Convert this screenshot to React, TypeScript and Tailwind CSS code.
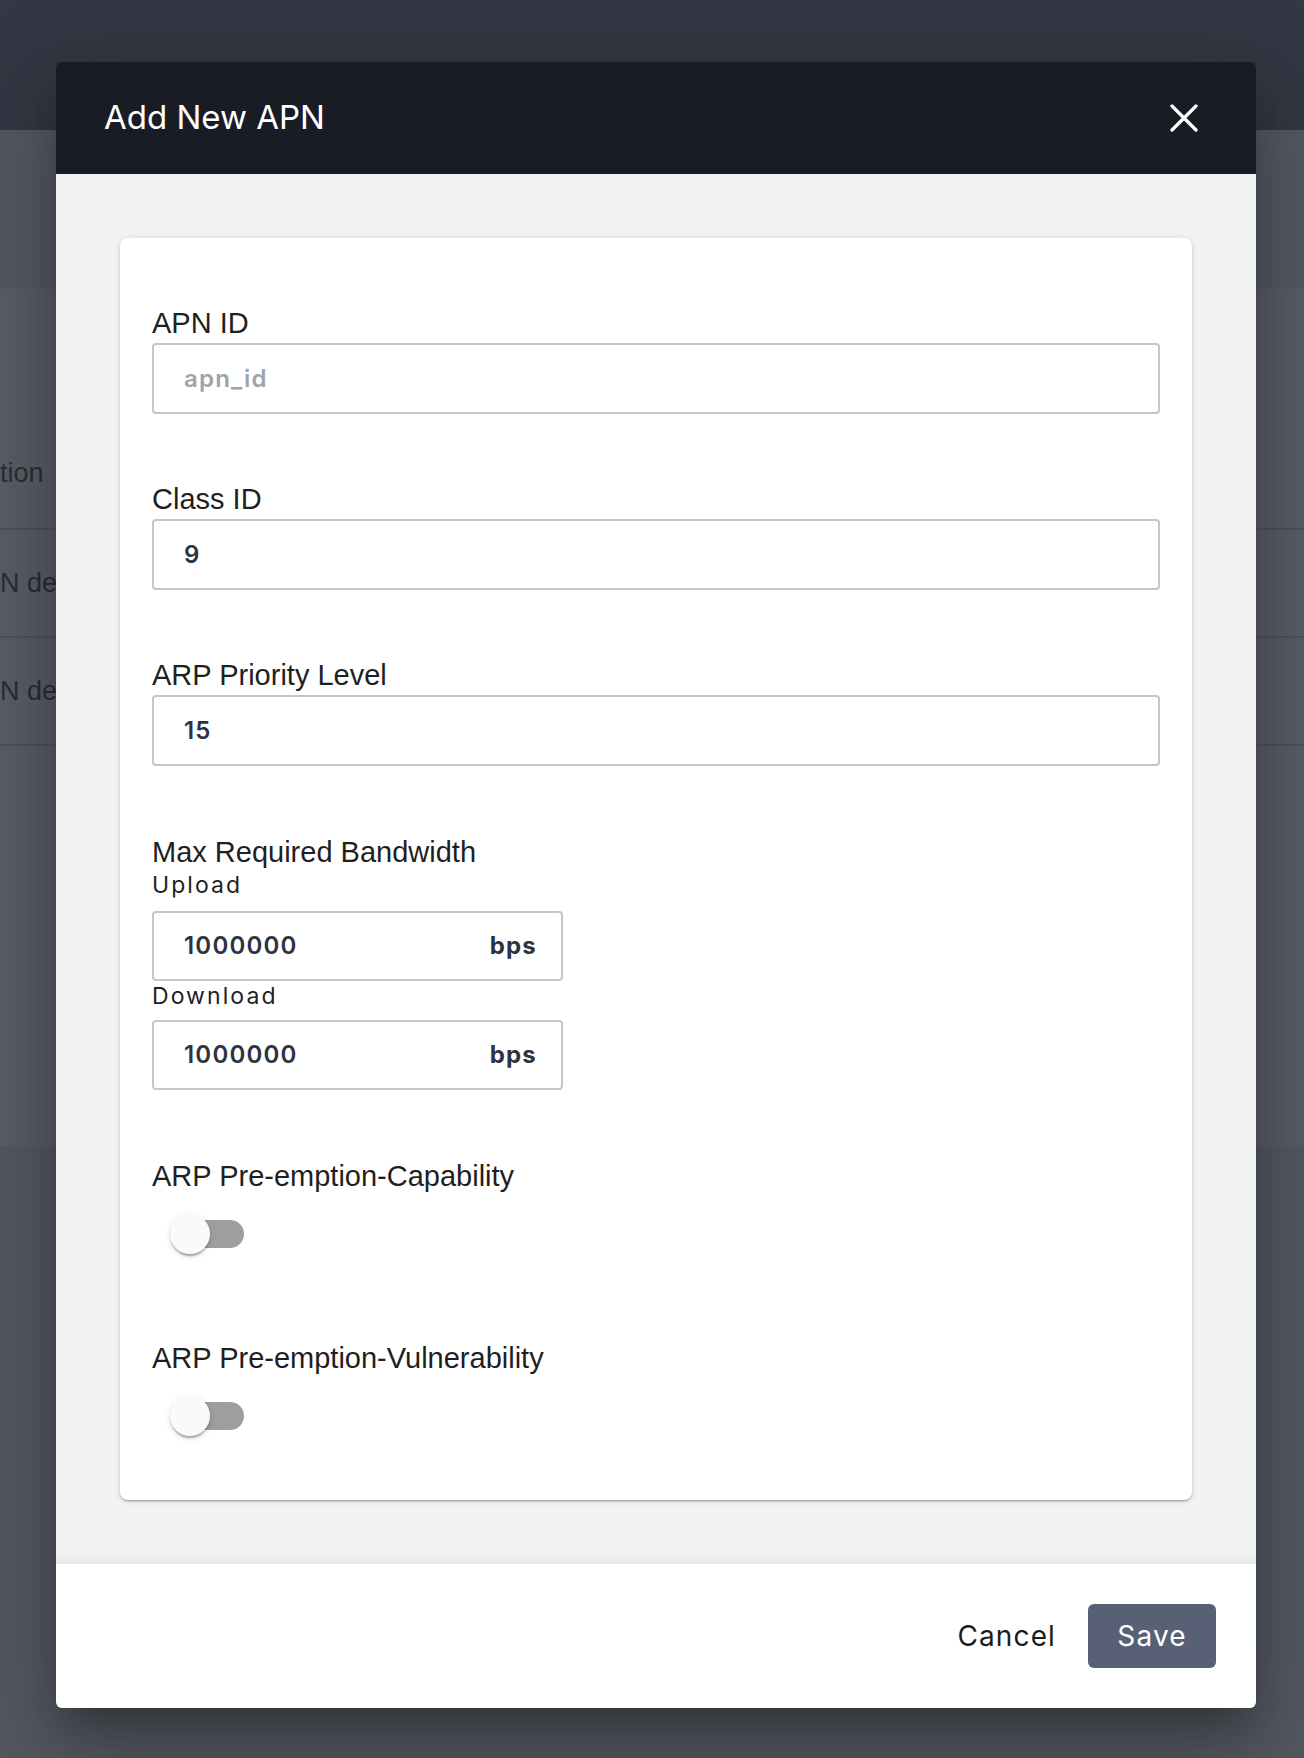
import React from "react";

const labelClass =
  "block font-['Liberation_Sans',Arial,sans-serif] text-[29px] leading-[32px] text-[#1f1f1f]";
const subLabelClass =
  "block text-[23px] leading-[27px] font-normal tracking-[0.09em] text-[#1f1f1f]";
const inputClass =
  "w-full bg-transparent outline-none text-[24px] font-semibold tracking-[0.05em] text-[#2d3340] placeholder:text-[#9fa3aa]";

function TextField({ label, value, placeholder }: { label: string; value?: string; placeholder?: string }) {
  return (
    <div className="mt-[69px]">
      <label className={labelClass}>{label}</label>
      <div className="mt-[4px] flex h-[71px] items-center rounded-[4px] border-2 border-[#c6c6c6] pl-[30px] pr-[26px]">
        <input className={inputClass} defaultValue={value} placeholder={placeholder} readOnly />
      </div>
    </div>
  );
}

function UnitField({ value }: { value: string }) {
  return (
    <div className="flex h-[70px] w-[411px] items-center rounded-[4px] border-2 border-[#c6c6c6] pl-[30px] pr-[24px]">
      <input className={inputClass} defaultValue={value} readOnly />
      <span className="text-[24px] font-bold tracking-[0.05em] text-[#2d3340]">bps</span>
    </div>
  );
}

function Toggle() {
  return (
    <div className="relative mt-[4px] h-[76px] w-[116px]">
      <div className="absolute left-[24px] top-[24px] h-[28px] w-[68px] rounded-full bg-[#9e9e9e]" />
      <div className="absolute left-[18px] top-[18px] h-[40px] w-[40px] rounded-full bg-[#fafafa] shadow-[0_4px_2px_-2px_rgba(0,0,0,0.2),0_2px_2px_0_rgba(0,0,0,0.14),0_2px_6px_0_rgba(0,0,0,0.12)]" />
    </div>
  );
}

function SwitchField({ label }: { label: string }) {
  return (
    <div className="mt-[70px]">
      <label className={labelClass}>{label}</label>
      <Toggle />
    </div>
  );
}

export default function App() {
  return (
    <div className="relative min-h-[1758px] w-full overflow-hidden bg-[#555962] font-['Inter',sans-serif]">
      {/* page behind the overlay */}
      <div className="h-[130px] bg-[#343844]" />
      <div className="mt-[159px] h-[857px] bg-[#5a5e67] font-['Liberation_Sans',Arial,sans-serif] text-[27px] text-[#2b2e35]">
        <div className="h-[129px]" />
        <div className="flex h-[112px] items-center border-b-2 border-[#4f535c]">tion</div>
        <div className="flex h-[108px] items-center border-b-2 border-[#4f535c]">N default</div>
        <div className="flex h-[108px] items-center border-b-2 border-[#4f535c]">N default</div>
      </div>

      {/* dialog */}
      <div className="absolute left-[56px] top-[62px] w-[1200px] overflow-hidden rounded-[6px] shadow-[0_22px_30px_-14px_rgba(0,0,0,0.25),0_48px_76px_6px_rgba(0,0,0,0.16),0_18px_92px_16px_rgba(0,0,0,0.14)]">
        <div className="flex h-[112px] items-center justify-between bg-[#1a1c25] pl-[48px] pr-[48px]">
          <h2 className="text-[33px] font-normal text-white">Add New APN</h2>
          <button className="flex h-[48px] w-[48px] items-center justify-center">
            <svg width="28" height="28" viewBox="0 0 28 28" fill="none">
              <path d="M2 2L26 26M26 2L2 26" stroke="white" strokeWidth="3.2" strokeLinecap="round" />
            </svg>
          </button>
        </div>

        <div className="bg-[#f2f2f2] p-[64px]">
          <div className="flex flex-col rounded-[8px] bg-white px-[32px] pb-[46px] shadow-[0_2px_2px_-1px_rgba(0,0,0,0.2),0_1px_2px_0_rgba(0,0,0,0.14),0_1px_6px_0_rgba(0,0,0,0.12)]">
            <TextField label="APN ID" placeholder="apn_id" />
            <TextField label="Class ID" value="9" />
            <TextField label="ARP Priority Level" value="15" />

            <div className="mt-[70px]">
              <label className={labelClass}>Max Required Bandwidth</label>
              <span className={`${subLabelClass} mt-[4px]`}>Upload</span>
              <div className="mt-[12px]">
                <UnitField value="1000000" />
              </div>
              <span className={`${subLabelClass} mt-[2px]`}>Download</span>
              <div className="mt-[10px]">
                <UnitField value="1000000" />
              </div>
            </div>

            <SwitchField label="ARP Pre-emption-Capability" />
            <SwitchField label="ARP Pre-emption-Vulnerability" />
          </div>
        </div>

        <div className="relative z-10 flex h-[144px] items-center justify-end gap-[16px] bg-white pr-[40px] shadow-[0_-4px_10px_rgba(0,0,0,0.06)]">
          <button className="h-[64px] px-[16px] text-[28px] tracking-[0.04em] text-[#1c1c1c]">Cancel</button>
          <button className="flex h-[64px] w-[128px] items-center justify-center rounded-[6px] bg-[#586076] text-[28px] tracking-[0.04em] text-white">
            Save
          </button>
        </div>
      </div>
    </div>
  );
}
